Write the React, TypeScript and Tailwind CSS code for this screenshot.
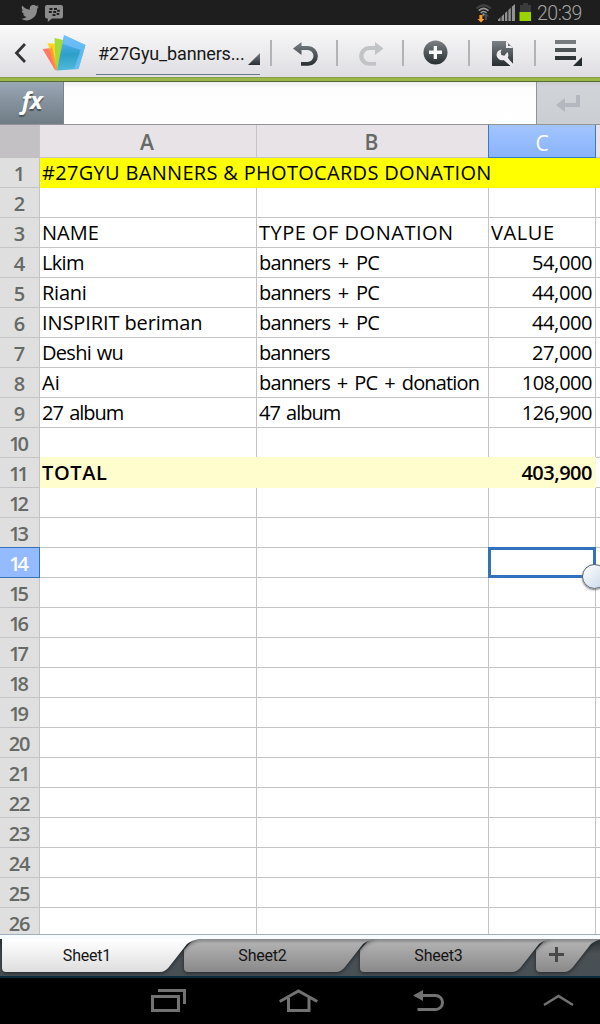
import type { ReactNode } from "react";

type Cell = { text: string; track: string };
type Row = { a?: Cell; b?: Cell; c?: Cell; fill?: "title" | "total" };

const rows: Row[] = [
  { a: { text: "#27GYU BANNERS & PHOTOCARDS DONATION", track: "tracking-[0.310px]" }, fill: "title" },
  {},
  {
    a: { text: "NAME", track: "tracking-[0px]" },
    b: { text: "TYPE OF DONATION", track: "tracking-[0.500px]" },
    c: { text: "VALUE", track: "tracking-[0.600px]" },
  },
  { a: { text: "Lkim", track: "tracking-[-0.700px]" }, b: { text: "banners + PC", track: "tracking-[-0.800px] [word-spacing:3.200px]" }, c: { text: "54,000", track: "tracking-[-0.400px]" } },
  { a: { text: "Riani", track: "tracking-[-0.250px]" }, b: { text: "banners + PC", track: "tracking-[-0.800px] [word-spacing:3.200px]" }, c: { text: "44,000", track: "tracking-[-0.400px]" } },
  { a: { text: "INSPIRIT beriman", track: "tracking-[-0.100px]" }, b: { text: "banners + PC", track: "tracking-[-0.800px] [word-spacing:3.200px]" }, c: { text: "44,000", track: "tracking-[-0.400px]" } },
  { a: { text: "Deshi wu", track: "tracking-[-0.700px] [word-spacing:1.200px]" }, b: { text: "banners", track: "tracking-[-0.900px]" }, c: { text: "27,000", track: "tracking-[-0.400px]" } },
  { a: { text: "Ai", track: "tracking-[0px]" }, b: { text: "banners + PC + donation", track: "tracking-[-0.850px] [word-spacing:2.600px]" }, c: { text: "108,000", track: "tracking-[-0.500px]" } },
  { a: { text: "27 album", track: "tracking-[-0.980px] [word-spacing:2px]" }, b: { text: "47 album", track: "tracking-[-1px] [word-spacing:2px]" }, c: { text: "126,900", track: "tracking-[-0.500px]" } },
  {},
  { a: { text: "TOTAL", track: "tracking-[0.600px]" }, c: { text: "403,900", track: "tracking-[-0.500px]" }, fill: "total" },
  ...Array.from({ length: 15 }, (): Row => ({})),
];

function Gradients() {
  return (
    <svg className="absolute size-0" aria-hidden="true">
      <defs>
        <linearGradient id="steel" x1="0" y1="0" x2="0" y2="1">
          <stop offset="0" stopColor="#7b8185" />
          <stop offset="1" stopColor="#282d30" />
        </linearGradient>
        <linearGradient id="sheet" x1="0" y1="0" x2="0" y2="1">
          <stop offset="0" stopColor="#62b9ff" />
          <stop offset="0.55" stopColor="#2e9fc8" />
          <stop offset="1" stopColor="#50bada" />
        </linearGradient>
        <linearGradient id="tabOn" x1="0" y1="0" x2="0" y2="1">
          <stop offset="0" stopColor="#ffffff" />
          <stop offset="1" stopColor="#dedede" />
        </linearGradient>
        <linearGradient id="tabOff" x1="0" y1="0" x2="0" y2="1">
          <stop offset="0" stopColor="#858585" />
          <stop offset="0.14" stopColor="#b0b0b0" />
          <stop offset="1" stopColor="#898989" />
        </linearGradient>
      </defs>
    </svg>
  );
}

function StatusBar() {
  return (
    <div className="flex h-[25px] shrink-0 items-center bg-[#1e1e1e]">
      <svg className="ml-[21px] mt-px h-[16px] w-[18px]" viewBox="0 2.5 24 20" preserveAspectRatio="none" fill="#8c8c8c">
        <path d="M24 4.6a10 10 0 0 1-2.8.8 4.9 4.9 0 0 0 2.1-2.7 10 10 0 0 1-3.1 1.2 4.9 4.9 0 0 0-8.4 4.5A14 14 0 0 1 1.700 3.200 4.900 4.900 0 0 0 3.200 9.700a4.900 4.900 0 0 1-2.200-.6v.1a4.900 4.900 0 0 0 3.900 4.800 5 5 0 0 1-2.200.1 4.900 4.900 0 0 0 4.600 3.400A9.900 9.900 0 0 1 0 19.500 14 14 0 0 0 21.500 7.100 10 10 0 0 0 24 4.600Z" />
      </svg>
      <svg className="ml-[6px] mt-[3px] h-[18px] w-[18px]" viewBox="0 0 18 18">
        <path d="M2 0H16Q18 0 18 2V11Q18 13.500 16 13.500H7L2.800 17V13.500H2Q0 13.500 0 11.500V2Q0 0 2 0Z" fill="#8c8c8c" />
        <g fill="#1e1e1e">
          <rect x="4.500" y="3" width="3" height="2" /><rect x="9" y="3" width="3" height="2" />
          <rect x="3.800" y="6" width="3" height="2" /><rect x="8.200" y="6" width="3" height="2" /><rect x="12.200" y="4.800" width="2.600" height="2" />
          <rect x="7.500" y="9" width="3" height="2" /><rect x="11.600" y="8" width="2.600" height="2" />
        </g>
      </svg>
      <svg className="ml-auto h-[20px] w-[18px]" viewBox="0 0 18 20" fill="none">
        <path d="M1.500 5.500Q8.500-1 16 5.500" stroke="#414141" strokeWidth="2.200" />
        <path d="M3.800 7.700Q8.500 3 13.500 7.700" stroke="#999" strokeWidth="1.700" />
        <path d="M5.700 9.800Q8.500 7.200 11.500 9.800" stroke="#999" strokeWidth="1.600" />
        <circle cx="8.500" cy="11.500" r="1.200" fill="#999" />
        <path d="M4.400 12h3v4h2L6 19.500 2.500 16h1.900Z" fill="#ff9d23" />
        <path d="M8 13.500 11 10l3 3.500h-2V17h-2v-3.500Z" fill="#494949" />
      </svg>
      <svg className="ml-[5px] h-[17px] w-[17px]" viewBox="0 0 17 17" fill="#929292">
        <path d="M0 15.500 2.500 13.300V17H0ZM3.500 12.500 6 10V17H3.500ZM7 9 9.300 6.900V17H7ZM10.400 6 12.800 3.700V17h-2.400ZM13.900 2.800 17 0V17h-3.100Z" />
      </svg>
      <svg className="ml-[4px] -mt-px h-[18px] w-[13px]" viewBox="0 0 13 18">
        <path d="M4 0h5v2h3v7H1V2h3Z" fill="#3b3b3b" />
        <path d="M.5 9H12v9H.5Z" fill="#9bd300" />
      </svg>
      <span className="ml-[5px] mr-[18px] mt-[2px] w-[45px] whitespace-nowrap font-['Roboto'] text-[19.500px] font-light leading-6 tracking-[-0.500px] text-[#a4a4a4]">20:39</span>
    </div>
  );
}

function Divider({ className }: { className: string }) {
  return <div className={`h-[26px] w-[2px] shrink-0 bg-[#b2b3b6] ${className}`} />;
}

function Toolbar() {
  return (
    <div className="flex h-[52px] shrink-0 bg-linear-to-b from-[#fafafa] via-[#ececee] to-[#dedee3] pt-[15px]">
      <svg className="ml-[14px] mt-[3px] h-[20px] w-[12px] shrink-0" viewBox="0 0 12 20">
        <path d="M11 1 2.500 10 11 19" fill="none" stroke="#343434" strokeWidth="2.800" />
      </svg>
      <svg className="-mt-[6px] ml-[16px] h-[38px] w-[44px] shrink-0" viewBox="42 34 44 38">
        <path d="M42.500 49 51.500 48 57 70.500 55 70Z" fill="#ff7968" />
        <path d="M47.500 43 56 44 58 70 56 70Z" fill="#ffd51f" />
        <path d="M54.500 38 63 40 58 70 56 70Z" fill="#a5db35" />
        <path d="M49 51 56 70 57 69 52 46Z" fill="#ff8738" opacity=".7" />
        <path d="M64 35 85.500 45 78.500 69 57 70.500Z" fill="url(#sheet)" />
        <path d="M64 35 85.500 45 78.500 69 74 69.500 80.500 50 63 44Z" fill="#79c5ff" opacity=".65" />
      </svg>
      <div className="ml-[10px] flex h-[35px] w-[164px] shrink-0 border-b border-[#687987]">
        <span className="ml-[2px] w-[150px] whitespace-nowrap font-['Roboto'] text-[18px] leading-[28px] tracking-[-0.150px] text-[#171717]">#27Gyu_banners...</span>
        <svg className="mt-[13px] h-[12px] w-[12px]" viewBox="0 0 12 12"><path d="M12 0V12H0Z" fill="url(#steel)" /></svg>
      </div>
      <Divider className="ml-[10px]" />
      <svg className="ml-[21px] mt-[1px] h-[26px] w-[25px] shrink-0" viewBox="0 0 25 26">
        <path d="M0 7.500 8.500 1V5H15A9.900 9.900 0 0 1 15 24.800H8V21h6.500a6 6 0 0 0 0-12H8.500v5Z" fill="url(#steel)" />
      </svg>
      <Divider className="ml-[18px]" />
      <svg className="ml-[21px] mt-[1px] h-[26px] w-[25px] shrink-0" viewBox="0 0 25 26">
        <path d="M24.500 7.500 16 1V5H10A9.900 9.900 0 0 0 10 24.800h7V21h-6.500a6 6 0 0 1 0-12H16v5Z" fill="#c1c3c6" />
      </svg>
      <Divider className="ml-[18px]" />
      <svg className="ml-[19px] h-[26px] w-[25px] shrink-0" viewBox="0 0 25 26">
        <circle cx="12.500" cy="12.500" r="12" fill="url(#steel)" />
        <path d="M10.700 6H14v4.500h5V14h-5v5h-3.300v-5H6v-3.500h4.700Z" fill="#fafafa" />
      </svg>
      <Divider className="ml-[20px]" />
      <svg className="ml-[22px] mt-px h-[25px] w-[21px] shrink-0" viewBox="0 0 21 25">
        <path d="M0 0H14L21 7V25H0Z" fill="url(#steel)" />
        <path d="M14 0V7H21L19 5H16V2Z" fill="#eee" />
        <path d="M9.500 8.500a6 6 0 0 0-5 5.500 5.500 5.500 0 0 0 7.200 5l6.800 6H21v-2.300l-5.300-5.900a5.500 5.500 0 0 0-.4-5.800l-2.900 3.800-3-.7-.7-2.800Z" fill="#ececee" />
      </svg>
      <Divider className="ml-[21px]" />
      <svg className="ml-[19px] h-[28px] w-[29px] shrink-0" viewBox="0 0 29 28">
        <path d="M0 0H21V4H0Z" fill="#777b7e" /><path d="M0 8H21V12H0Z" fill="#4e5356" /><path d="M0 16H21V20H0Z" fill="#303538" />
        <path d="M27 17V26H18Z" fill="#252a2d" />
      </svg>
    </div>
  );
}

function FormulaBar() {
  return (
    <>
      <div className="h-[5px] shrink-0 border-t border-b border-t-[#879e49] border-b-[#596937] bg-[#9ab84a]" />
      <div className="flex h-[43px] shrink-0 border-b border-[#969398]">
        <div className="flex w-[64px] items-start justify-center border-r border-[#77848e] bg-linear-to-b from-[#9aa7b5] to-[#6f7c85]">
          <span className="mt-[2px] ml-px font-['Open_Sans'] text-[24px] font-bold italic leading-8 tracking-[-0.500px] text-white [text-shadow:0_2px_1px_#46535b]">fx</span>
        </div>
        <div className="flex-1 border-r border-[#929292] bg-linear-to-b from-[#ededed] via-[#fdfdfd] via-15% to-white" />
        <div className="flex w-[63px] justify-center bg-linear-to-b from-[#c6c9ce] via-[#d0d3d8] via-10% to-[#cbced3]">
          <svg className="mt-[13px] h-[17px] w-[25px]" viewBox="0 0 25 17">
            <path d="M0 10 9 3v5h11V0h4v12H9v5Z" fill="#b4b7bd" />
          </svg>
        </div>
      </div>
    </>
  );
}

const columnLine = "border-r border-[#c4c4c4]";

function rowNumberTracking(n: number) {
  if (n >= 10 && n < 20) return "tracking-[-3px] pr-[4px]";
  return n < 10 ? "" : "tracking-[-1.200px] pr-[1px]";
}

function Sheet() {
  return (
    <div className="relative h-[810px] shrink-0 overflow-hidden border-b border-[#9eafbd] bg-white font-['Open_Sans'] text-black">
      <div className="flex h-[33px] text-center text-[21px] font-semibold leading-[34px] text-[#666a66]">
        <div className="w-[39px] bg-[#c3c1c4]" />
        <div className="w-[218px] border-x border-b border-[#c6c4c6] bg-[#e7e3e7] pr-[2px]">A</div>
        <div className="w-[231px] border-b border-[#c6c4c6] bg-[#e7e3e7] pr-[2px]">B</div>
        <div className="w-[108px] border border-t-0 border-[#397bc3] bg-linear-to-b from-[#a3c5ff] to-[#89b3fb] font-medium leading-[36px] text-white">C</div>
        <div className="flex-1 border-b border-[#c6c4c6] bg-[#e7e3e7]" />
      </div>
      {rows.map((row, index) => {
        const selected = index === 13;
        const title = row.fill === "title";
        const total = row.fill === "total";
        return (
          <div key={index} className="flex h-[30px] text-[20px] leading-[30px]">
            <div className={`relative flex w-[40px] shrink-0 justify-center border-r border-b font-semibold leading-[31px] ${rowNumberTracking(index + 1)} ${selected ? "z-10 -mt-px h-[31px] border-t border-[#3473b7] bg-[#94baff] text-white" : "border-[#c4c4c4] bg-[#dfdfdf] text-[#666a66]"}`}>
              {index + 1}
            </div>
            {title || total ? (
              <>
                <div className={`relative z-[1] flex justify-between whitespace-nowrap pl-[2px] ${title ? "w-[560px] bg-[#ffff00]" : "-mt-px h-[31px] w-[556px] bg-[#fffdcd] pr-[4px] font-semibold leading-[32px]"}`}>
                  <span className={row.a?.track}>{row.a?.text}</span>
                  {row.c && <span className={row.c.track}>{row.c.text}</span>}
                </div>
                {total && <div className="flex-1 border-b border-[#c4c4c4]" />}
              </>
            ) : (
              <>
                <div className={`w-[217px] border-b pl-[2px] whitespace-nowrap ${columnLine}`}><span className={row.a?.track}>{row.a?.text}</span></div>
                <div className={`w-[232px] border-b pl-[2px] whitespace-nowrap ${columnLine}`}><span className={row.b?.track}>{row.b?.text}</span></div>
                <div className={`relative w-[107px] border-b pl-[2px] pr-[3px] whitespace-nowrap ${columnLine} ${index > 2 ? "text-right" : ""}`}>
                  <span className={row.c?.track}>{row.c?.text}</span>
                  {selected && (
                    <>
                      <div className="absolute -left-px -top-px z-10 h-[31px] w-[108px] border-[3px] border-[#3272bd]" />
                      <div className="absolute left-[93px] top-[16px] z-20 size-[25px] rounded-full border-[1.500px] border-[#5b6670] bg-linear-to-br from-white to-[#c9d8e8] shadow-[0_1px_2px_#777]" />
                    </>
                  )}
                </div>
                <div className="flex-1 border-b border-[#c4c4c4]" />
              </>
            )}
          </div>
        );
      })}
    </div>
  );
}

function TabShape({ width, active, children, className }: { width: number; active?: boolean; children: ReactNode; className: string }) {
  const start = active ? "M0 0" : "M0 11L7 3Q9 0 14 0";
  const d = `${start}H${width + 36}Q${width + 29} 1 ${width + 24} 5L${width + 6} 28Q${width + 2} 33 ${width - 3} 33H4Q0 33 0 29Z`;
  return (
    <div className={`relative h-[33px] shrink-0 ${className}`}>
      <svg className="absolute inset-0 size-full overflow-visible [filter:drop-shadow(0_1px_2px_#1d2225)]" aria-hidden="true">
        <path d={d} fill={active ? "url(#tabOn)" : "url(#tabOff)"} />
      </svg>
      <div className="relative flex h-full items-center justify-center font-['Roboto'] text-[16px] tracking-[-0.200px] text-[#151515]">{children}</div>
    </div>
  );
}

function SheetTabs() {
  return (
    <div className="h-[43px] shrink-0 bg-[#f8fcfd] pt-[4px]">
      <div className="flex h-[39px] overflow-hidden border-b-2 border-[#082b3b] bg-linear-to-b from-[#2e3437] via-[#4a5054] via-40% to-[#485055] pl-[2px]">
        <TabShape width={161} active className="z-30 w-[182px]"><span className="mr-[12px]">Sheet1</span></TabShape>
        <TabShape width={155} className="z-20 w-[176px]"><span className="mr-[19px]">Sheet2</span></TabShape>
        <TabShape width={155} className="z-10 w-[176px]"><span className="mr-[19px]">Sheet3</span></TabShape>
        <TabShape width={31} className="w-[60px]">
          <svg className="mr-[19px] -mt-[2px] h-[15px] w-[15px]" viewBox="0 0 15 15"><path d="M6 0h3v6h6v3H9v6H6V9H0V6h6Z" fill="#484848" /></svg>
        </TabShape>
      </div>
    </div>
  );
}

function NavigationBar() {
  return (
    <div className="flex flex-1 bg-black pt-[11px] text-[#727272]">
      <svg className="ml-[151px] h-[23px] w-[35px]" viewBox="0 0 35 23" fill="none" stroke="currentColor" strokeWidth="3">
        <path d="M1.500 7.500H27.500V21.500H1.500ZM7 1.500H33.500V15" />
      </svg>
      <svg className="ml-[93px] h-[23px] w-[39px]" viewBox="0 0 39 23" fill="none" stroke="currentColor" strokeWidth="3">
        <path d="M.7 12.500 19.500 2 38.300 12.500M9.500 9V21.500H30V9" />
      </svg>
      <svg className="ml-[95px] mt-px h-[22px] w-[33px]" viewBox="0 0 33 22">
        <path d="M9 5.500H22.500A7 7 0 0 1 22.500 19.500H4.500" fill="none" stroke="currentColor" strokeWidth="3" /><path d="M0 5.500 10 0V11Z" fill="currentColor" />
      </svg>
      <svg className="ml-[97px] mt-[5px] h-[13px] w-[31px]" viewBox="0 0 31 13"><path d="M1 11 15.500 2 30 11" fill="none" stroke="currentColor" strokeWidth="2.500" /></svg>
    </div>
  );
}

export default function App() {
  return (
    <main className="relative flex h-[1024px] w-[600px] flex-col overflow-hidden bg-white">
      <Gradients />
      <StatusBar />
      <Toolbar />
      <FormulaBar />
      <Sheet />
      <SheetTabs />
      <NavigationBar />
    </main>
  );
}
